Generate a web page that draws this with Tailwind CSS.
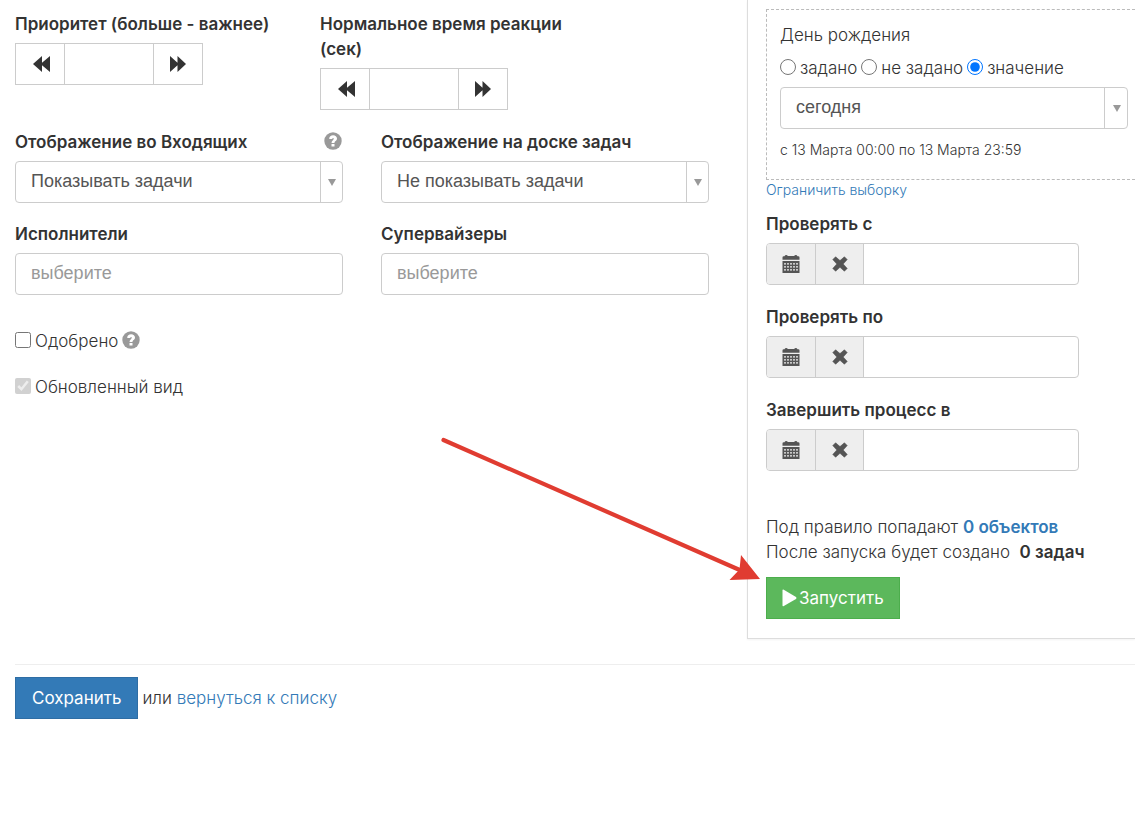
<!DOCTYPE html>
<html lang="ru">
<head>
    <meta charset="UTF-8" />
    <meta name="viewport" content="width=device-width, initial-scale=1.0" />
    <title>Настройки процесса</title>
    <script src="https://cdn.jsdelivr.net/npm/@tailwindcss/browser@4"></script>
</head>

<body class="bg-white font-['Inter','Liberation_Sans',sans-serif] text-[17px] leading-[25px] font-light text-[#333]">
    <!-- Иконки -->
    <svg class="hidden">
        <symbol id="icon-backward" viewBox="0 0 18 16">
            <path d="M0 8 L9 0 V6.8 L17 0 V16 L9 9.2 V16 Z" />
        </symbol>
        <symbol id="icon-forward" viewBox="0 0 18 16">
            <path d="M17 8 L8.5 0 V6.8 L1 0 V16 L8.5 9.2 V16 Z" />
        </symbol>
        <symbol id="icon-help" viewBox="0 0 18 18">
            <circle cx="9" cy="9" r="8.7" fill="#999" />
            <path d="M5.2 7 C5.2 4.6 6.9 3.3 9.1 3.3 C11.3 3.3 13 4.6 13 6.6 C13 9 10.5 9.1 10.5 10.9 H7.5 C7.5 8.5 9.8 8.1 9.8 6.8 C9.8 5.7 8.3 5.7 8.2 7 Z M7.5 11.9 H10.5 V14.6 H7.5 Z" fill="#fff" />
        </symbol>
        <symbol id="icon-calendar" viewBox="0 0 18 18">
            <path d="M0.500 4.800 V2.500 Q0.500 1.300 1.700 1.300 H2.500 Q3 0 4.200 0 Q5.400 0 5.800 1 H12.200 Q12.600 0 13.800 0 Q15 0 15.500 1.300 H16.300 Q17.500 1.300 17.500 2.500 V4.800 Z" />
            <path fill-rule="evenodd" d="M0.5 6 H17.5 V18 H0.5 Z M2 8.300 V9.5 H4 V8.300 Z M5 8.300 V9.5 H7 V8.300 Z M8 8.300 V9.5 H10 V8.300 Z M11 8.300 V9.5 H13 V8.300 Z M14 8.300 V9.5 H16 V8.300 Z M2 11.300 V12.5 H4 V11.300 Z M5 11.300 V12.5 H7 V11.300 Z M8 11.300 V12.5 H10 V11.300 Z M11 11.300 V12.5 H13 V11.300 Z M14 11.300 V12.5 H16 V11.300 Z M2 14.300 V15.5 H4 V14.300 Z M5 14.300 V15.5 H7 V14.300 Z M8 14.300 V15.5 H10 V14.300 Z M11 14.300 V15.5 H13 V14.300 Z M14 14.300 V15.5 H16 V14.300 Z" />
        </symbol>
        <symbol id="icon-remove" viewBox="0 0 16 16">
            <path d="M3.6 0.8 L8 4.6 L12.4 0.8 L15.2 3.6 L11.2 8 L15.2 12.4 L12.4 15.2 L8 11.3 L3.6 15.2 L0.8 12.4 L4.8 8 L0.8 3.6 Z" stroke="currentColor" stroke-width="0.6" stroke-linejoin="round" />
        </symbol>
    </svg>

    <form class="relative">
        <div class="flex">
            <!-- Основные настройки -->
            <div class="flex-1 pl-[15px] pr-[38px] pt-3">
                <div class="flex gap-[47px]">
                    <div class="w-[258px]">
                        <label for="priority" class="block mb-[6px] font-semibold">Приоритет (больше - важнее)</label>
                        <div class="flex w-[188px] h-[42px] border border-[#ccc] text-[#333]">
                            <button type="button" aria-label="Уменьшить" class="w-[49px] pl-1 flex items-center justify-center border-r border-[#ccc]">
                                <svg class="w-[18px] h-4" fill="currentColor"><use href="#icon-backward" /></svg>
                            </button>
                            <input id="priority" type="text" class="flex-1 min-w-0 px-3 outline-none" />
                            <button type="button" aria-label="Увеличить" class="w-[49px] flex items-center justify-center border-l border-[#ccc]">
                                <svg class="w-[18px] h-4" fill="currentColor"><use href="#icon-forward" /></svg>
                            </button>
                        </div>
                    </div>
                    <div class="w-[250px]">
                        <label for="reaction" class="block mb-[6px] font-semibold">Нормальное время реакции (сек)</label>
                        <div class="flex w-[188px] h-[42px] border border-[#ccc] text-[#333]">
                            <button type="button" aria-label="Уменьшить" class="w-[49px] pl-1 flex items-center justify-center border-r border-[#ccc]">
                                <svg class="w-[18px] h-4" fill="currentColor"><use href="#icon-backward" /></svg>
                            </button>
                            <input id="reaction" type="text" class="flex-1 min-w-0 px-3 outline-none" />
                            <button type="button" aria-label="Увеличить" class="w-[49px] flex items-center justify-center border-l border-[#ccc]">
                                <svg class="w-[18px] h-4" fill="currentColor"><use href="#icon-forward" /></svg>
                            </button>
                        </div>
                    </div>
                </div>

                <div class="grid grid-cols-2 gap-x-[38px] gap-y-[19px] mt-5">
                    <div>
                        <div class="flex items-center justify-between mb-[6px]">
                            <label for="inbox" class="font-semibold">Отображение во Входящих</label>
                            <svg class="w-[18px] h-[18px] mr-px mb-1"><use href="#icon-help" /></svg>
                        </div>
                        <div class="relative">
                            <select id="inbox" class="block w-full h-[42px] pl-[15px] pr-8 pb-[2px] appearance-none rounded border border-[#ccc] font-['Liberation_Sans',sans-serif] text-[18px] font-normal text-[#555]">
                                <option>Показывать задачи</option>
                            </select>
                            <span class="absolute right-0 inset-y-px w-[23px] flex items-center justify-center border-l border-[#ccc] pointer-events-none">
                                <svg class="w-2 h-[7px]" viewBox="0 0 8 7" fill="#999"><path d="M0 0 H8 L4 7 Z" /></svg>
                            </span>
                        </div>
                    </div>
                    <div>
                        <label for="board" class="block mb-[6px] font-semibold">Отображение на доске задач</label>
                        <div class="relative">
                            <select id="board" class="block w-full h-[42px] pl-[15px] pr-8 pb-[2px] appearance-none rounded border border-[#ccc] font-['Liberation_Sans',sans-serif] text-[18px] font-normal text-[#555]">
                                <option>Не показывать задачи</option>
                            </select>
                            <span class="absolute right-0 inset-y-px w-[23px] flex items-center justify-center border-l border-[#ccc] pointer-events-none">
                                <svg class="w-2 h-[7px]" viewBox="0 0 8 7" fill="#999"><path d="M0 0 H8 L4 7 Z" /></svg>
                            </span>
                        </div>
                    </div>
                    <div>
                        <label for="performers" class="block mb-[6px] font-semibold">Исполнители</label>
                        <input id="performers" type="text" placeholder="выберите" class="block w-full h-[42px] px-[15px] pb-[2px] rounded border border-[#ccc] font-['Liberation_Sans',sans-serif] text-[18px] font-normal placeholder:text-[#999]" />
                    </div>
                    <div>
                        <label for="supervisors" class="block mb-[6px] font-semibold">Супервайзеры</label>
                        <input id="supervisors" type="text" placeholder="выберите" class="block w-full h-[42px] px-[15px] pb-[2px] rounded border border-[#ccc] font-['Liberation_Sans',sans-serif] text-[18px] font-normal placeholder:text-[#999]" />
                    </div>
                </div>

                <div class="mt-[34px] flex items-center">
                    <input id="approved" type="checkbox" class="w-4 h-4 mr-1 mb-1" />
                    <label for="approved">Одобрено</label>
                    <svg class="w-[18px] h-[18px] ml-1 mb-1"><use href="#icon-help" /></svg>
                </div>
                <div class="mt-[21px] flex items-center">
                    <input id="new-view" type="checkbox" checked disabled class="w-4 h-4 mr-1 mb-1" />
                    <label for="new-view">Обновленный вид</label>
                </div>
            </div>

            <!-- Условия запуска -->
            <div class="w-[388px] shrink-0 pl-[18px] pt-[9px] pb-[19px] border-l border-b border-[#ddd] shadow-xs">
                <fieldset class="h-[171px] pl-[13px] pr-[7px] pt-[13px] border border-r-0 border-dashed border-[#bbb]">
                    <p>День рождения</p>
                    <div class="mt-2 flex items-center">
                        <input id="is-set" type="radio" name="birthday" class="w-4 h-4 mr-1 mb-1" />
                        <label for="is-set">задано</label>
                        <input id="not-set" type="radio" name="birthday" class="w-4 h-4 ml-1 mr-1 mb-1" />
                        <label for="not-set">не задано</label>
                        <input id="has-value" type="radio" name="birthday" checked class="w-4 h-4 ml-1 mr-1 mb-1" />
                        <label for="has-value">значение</label>
                    </div>
                    <div class="relative mt-[6px]">
                        <select aria-label="День рождения" class="block w-full h-[42px] pl-[15px] pr-8 pb-[2px] appearance-none rounded border border-[#ccc] font-['Liberation_Sans',sans-serif] text-[18px] font-normal text-[#555]">
                            <option>сегодня</option>
                        </select>
                        <span class="absolute right-0 inset-y-px w-[24px] flex items-center justify-center border-l border-[#ccc] pointer-events-none">
                            <svg class="w-2 h-[7px]" viewBox="0 0 8 7" fill="#999"><path d="M0 0 H8 L4 7 Z" /></svg>
                        </span>
                    </div>
                    <p class="mt-[11px] text-[14px] leading-5">с 13 Марта 00:00 по 13 Марта 23:59</p>
                </fieldset>
                <a href="#" class="block text-[14px] leading-5 text-[#337ab7]">Ограничить выборку</a>

                <div class="mt-3 w-[313px] space-y-5">
                    <div>
                        <label for="check-from" class="block mb-[6px] font-semibold">Проверять с</label>
                        <div class="flex h-[42px] rounded border border-[#ccc] overflow-hidden text-[#555]">
                            <button type="button" aria-label="Календарь" class="w-[49px] flex items-center justify-center bg-[#eee] border-r border-[#ccc]">
                                <svg class="w-[18px] h-[18px]" fill="currentColor"><use href="#icon-calendar" /></svg>
                            </button>
                            <button type="button" aria-label="Очистить" class="w-[48px] flex items-center justify-center bg-[#eee] border-r border-[#ccc]">
                                <svg class="w-4 h-4" fill="currentColor"><use href="#icon-remove" /></svg>
                            </button>
                            <input id="check-from" type="text" class="flex-1 min-w-0 px-3 outline-none" />
                        </div>
                    </div>
                    <div>
                        <label for="check-to" class="block mb-[6px] font-semibold">Проверять по</label>
                        <div class="flex h-[42px] rounded border border-[#ccc] overflow-hidden text-[#555]">
                            <button type="button" aria-label="Календарь" class="w-[49px] flex items-center justify-center bg-[#eee] border-r border-[#ccc]">
                                <svg class="w-[18px] h-[18px]" fill="currentColor"><use href="#icon-calendar" /></svg>
                            </button>
                            <button type="button" aria-label="Очистить" class="w-[48px] flex items-center justify-center bg-[#eee] border-r border-[#ccc]">
                                <svg class="w-4 h-4" fill="currentColor"><use href="#icon-remove" /></svg>
                            </button>
                            <input id="check-to" type="text" class="flex-1 min-w-0 px-3 outline-none" />
                        </div>
                    </div>
                    <div>
                        <label for="finish-at" class="block mb-[6px] font-semibold">Завершить процесс в</label>
                        <div class="flex h-[42px] rounded border border-[#ccc] overflow-hidden text-[#555]">
                            <button type="button" aria-label="Календарь" class="w-[49px] flex items-center justify-center bg-[#eee] border-r border-[#ccc]">
                                <svg class="w-[18px] h-[18px]" fill="currentColor"><use href="#icon-calendar" /></svg>
                            </button>
                            <button type="button" aria-label="Очистить" class="w-[48px] flex items-center justify-center bg-[#eee] border-r border-[#ccc]">
                                <svg class="w-4 h-4" fill="currentColor"><use href="#icon-remove" /></svg>
                            </button>
                            <input id="finish-at" type="text" class="flex-1 min-w-0 px-3 outline-none" />
                        </div>
                    </div>
                </div>

                <p class="mt-[44px]">Под правило попадают <a href="#" class="font-semibold text-[#337ab7]">0 объектов</a></p>
                <p>После запуска будет создано &nbsp;<b class="font-semibold">0 задач</b></p>
                <button type="button" class="mt-3 h-[42px] px-[15px] flex items-center gap-[2px] border border-[#4cae4c] bg-[#5cb85c] font-normal text-white">
                    <svg class="w-[15px] h-[18px]" viewBox="0 0 15 18" fill="currentColor"><path d="M0.5 1.5 Q0.5 0.2 1.8 0.8 L14 8 Q15 9 14 10 L1.8 17 Q0.5 17.6 0.5 16.4 Z" /></svg>
                    Запустить
                </button>
            </div>
        </div>

        <!-- Сохранение -->
        <div class="ml-[15px] mt-[25px] pt-3 flex items-center gap-1 border-t border-[#eee]">
            <button type="submit" class="h-[42px] px-4 border border-[#2e6da4] bg-[#337ab7] font-normal text-white">Сохранить</button>
            <span>или <a href="#" class="text-[#337ab7]">вернуться к списку</a></span>
        </div>

        <!-- Стрелка-подсказка к кнопке запуска -->
        <svg class="absolute right-[375px] top-[434px] w-[320px] h-[148px] pointer-events-none" viewBox="440 434 320 148" aria-hidden="true">
            <path d="M443.5 440 L742 571" stroke="#e03c31" stroke-width="4.2" stroke-linecap="round" />
            <path d="M760 579 L741 555 L739.5 569.5 L729.5 580 Z" fill="#e03c31" />
        </svg>
    </form>
</body>

</html>
